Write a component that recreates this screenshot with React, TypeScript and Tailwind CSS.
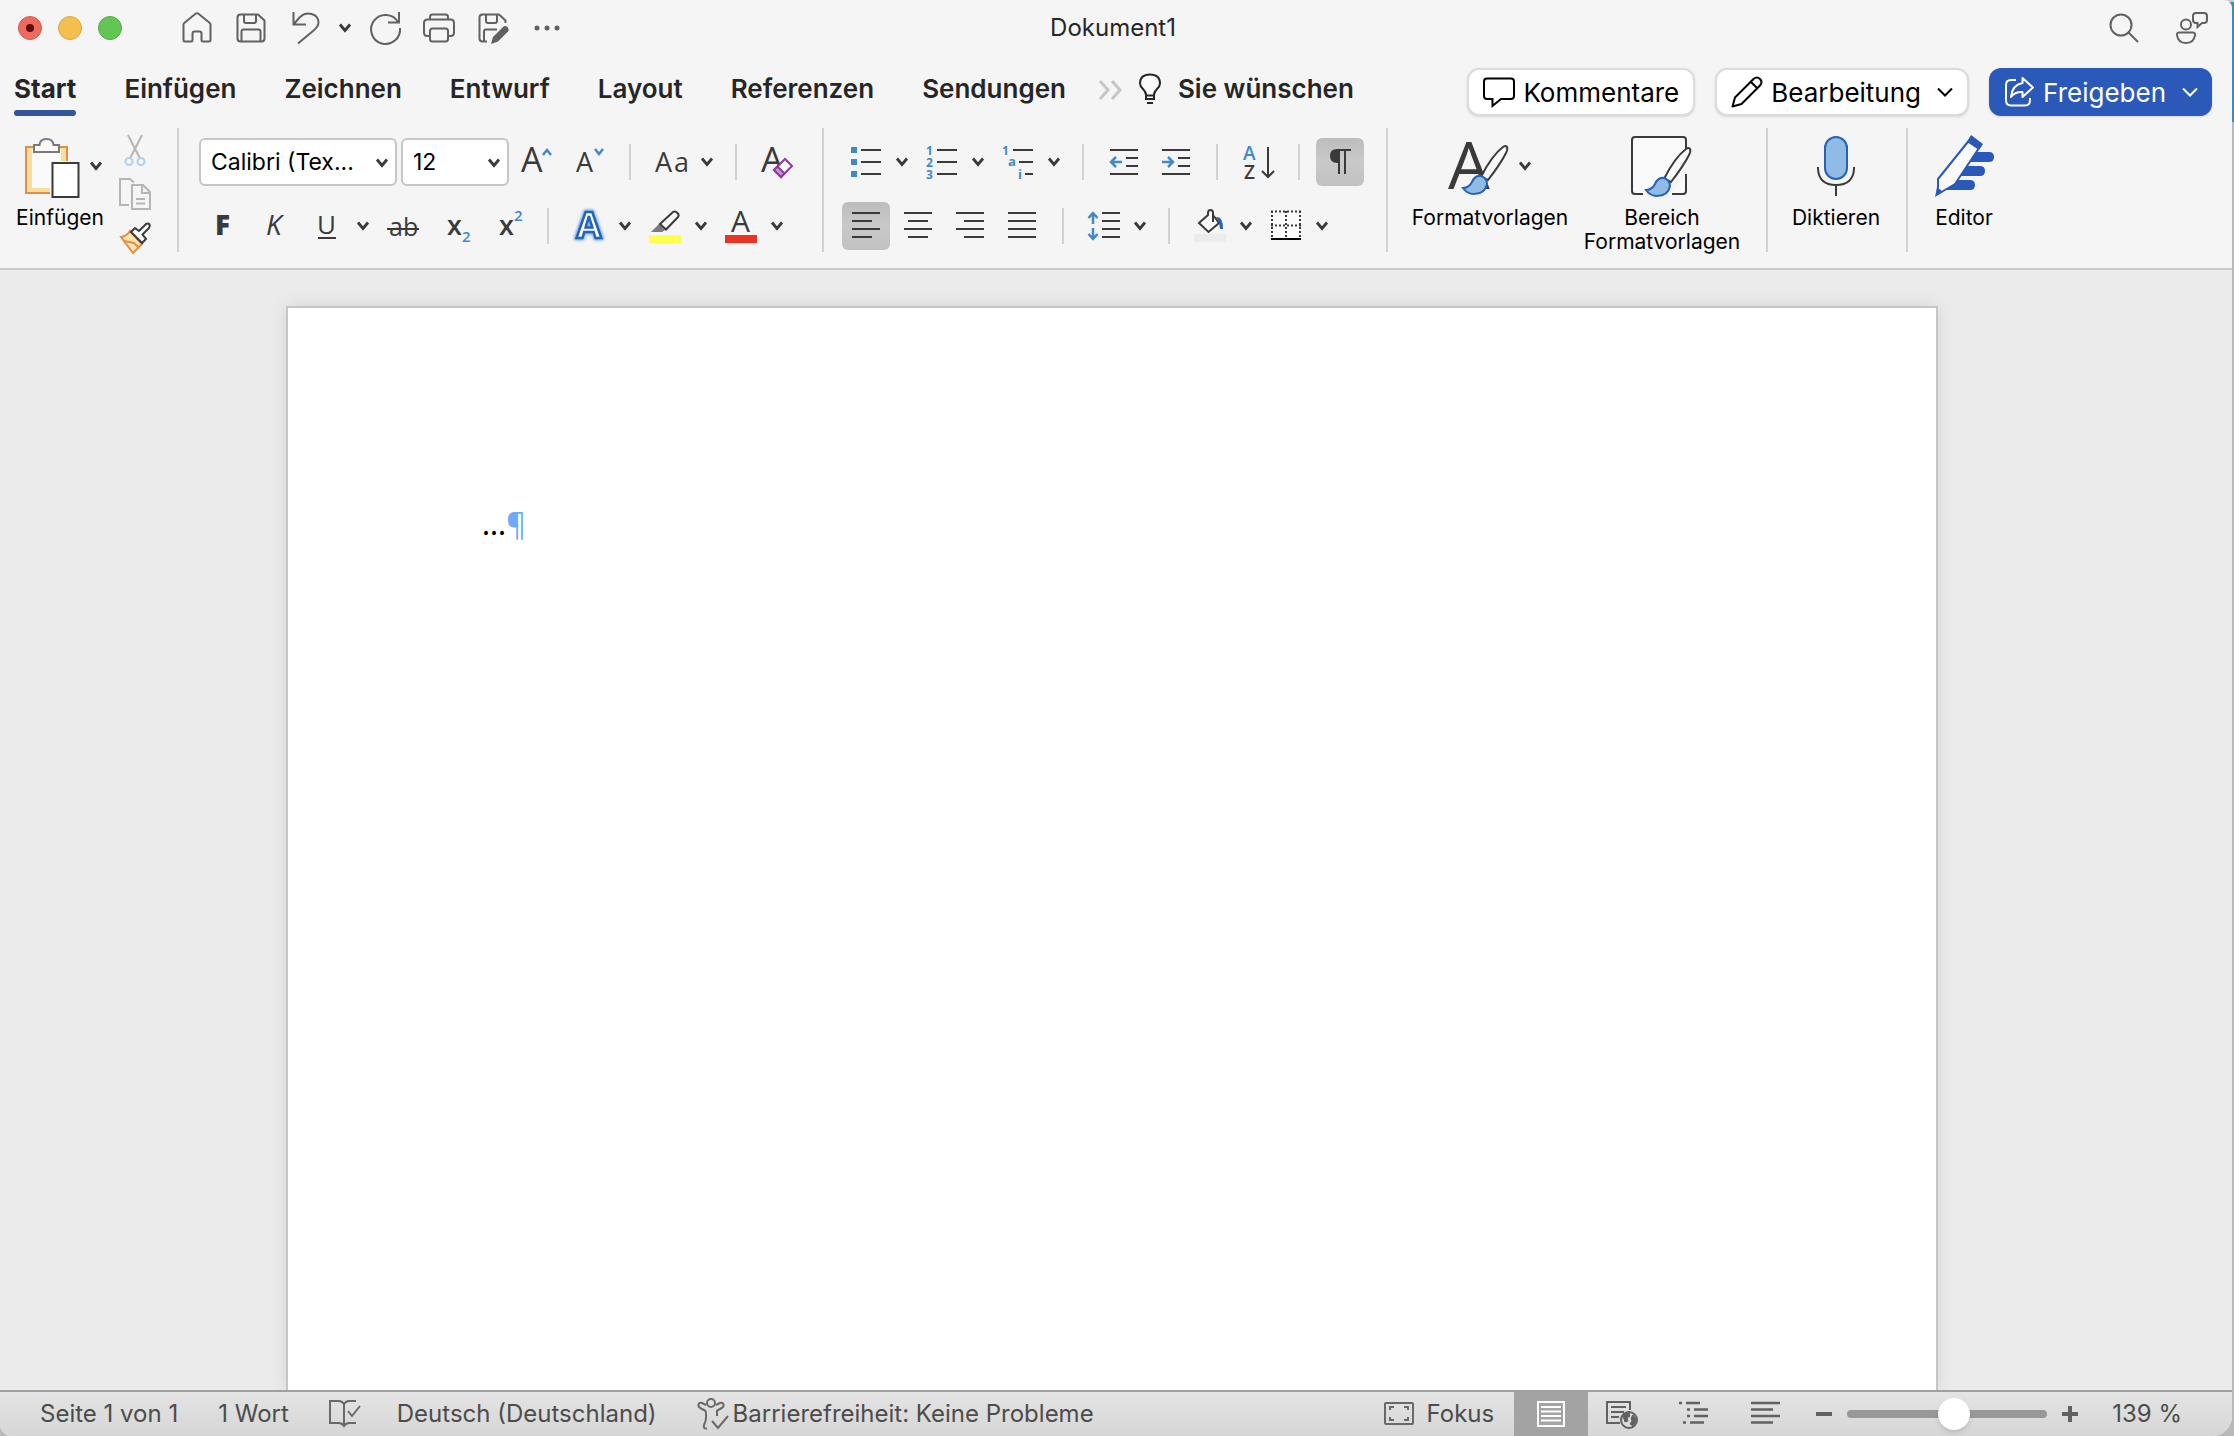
import { useState } from "react";
import type { ReactNode } from "react";

const tabs = ["Start", "Einfügen", "Zeichnen", "Entwurf", "Layout", "Referenzen", "Sendungen"];

function Chevron({ className = "" }: { className?: string }) {
  return (
    <svg width="14" height="10" viewBox="0 0 14 10" fill="none" stroke="currentColor" strokeWidth="2.8" className={className}>
      <path d="M2 1.500L7 7.500L12 1.500" />
    </svg>
  );
}

function Icon({ children, className = "" }: { children: ReactNode; className?: string }) {
  return (
    <svg
      width="32"
      height="32"
      viewBox="0 0 32 32"
      fill="none"
      stroke="currentColor"
      strokeWidth="2"
      className={`shrink-0 overflow-visible ${className}`}
      aria-hidden="true"
    >
      {children}
    </svg>
  );
}

function QuickButton({ label, children }: { label: string; children: ReactNode }) {
  return (
    <button aria-label={label} className="flex w-[54px] items-center justify-center text-[#616161]">
      <Icon>{children}</Icon>
    </button>
  );
}

function ToolButton({ label, active = false, children }: { label: string; active?: boolean; children: ReactNode }) {
  return (
    <button
      aria-label={label}
      aria-pressed={active}
      className={
        active
          ? "flex size-12 items-center justify-center rounded-md bg-linear-to-b from-[#bdbdbd] via-[#c9c9c9] to-[#c1c1c1]"
          : "flex size-12 items-center justify-center rounded-md"
      }
    >
      <Icon>{children}</Icon>
    </button>
  );
}

function MenuButton({ label, children }: { label: string; children: ReactNode }) {
  return (
    <div className="flex">
      <ToolButton label={label}>{children}</ToolButton>
      <button aria-label={`${label}, Optionen`} className="flex w-6 items-center justify-center">
        <Chevron />
      </button>
    </div>
  );
}

function Separator() {
  return (
    <div className="flex w-[26px] justify-center">
      <div className="h-9 w-[2px] bg-[#d2d2d2]" />
    </div>
  );
}

function Select({ label, value, className }: { label: string; value: string; className: string }) {
  return (
    <div className={`relative ${className}`}>
      <select
        aria-label={label}
        className="h-12 w-full appearance-none rounded-md border-2 border-[#c6c6c6] bg-white pl-[10px] text-[23px] text-black"
      >
        <option>{value}</option>
      </select>
      <Chevron className="pointer-events-none absolute top-5 right-2" />
    </div>
  );
}

function Letter({ x, y, size, children, fill = "#3a3a3a", weight = 400, italic = false }: {
  x: number; y: number; size: number; children: ReactNode; fill?: string; weight?: number; italic?: boolean
}) {
  return (
    <text
      x={x}
      y={y}
      fontSize={size}
      fill={fill}
      stroke="none"
      fontWeight={weight}
      fontStyle={italic ? "italic" : "normal"}
      className="font-['Open_Sans','Noto_Sans',sans-serif]"
    >
      {children}
    </text>
  );
}

function Brush() {
  return (
    <>
      <path d="M24 34C30 22 38 10 46 4Q49 2 50 4Q51 6 49 10C44 20 38 28 31 37Z" fill="#fafafa" stroke="#3a3a3a" />
      <path d="M6 45Q12 45 15 39Q18 32 24 33Q30 35 30 41Q28 51 17 51Q10 51 6 45Z" fill="#90bbe6" stroke="#2563b5" />
    </>
  );
}

function TitleBar() {
  return (
    <header className="flex h-14 items-center pr-6 pl-[18px]">
      <div className="flex flex-1 items-center">
        <div className="flex gap-4">
          <button aria-label="Schließen" className="flex size-6 items-center justify-center rounded-full border border-[#d85a50] bg-[#ed6a5e]">
            <span className="size-2 rounded-full bg-[#5f0d08]" />
          </button>
          <button aria-label="Minimieren" className="size-6 rounded-full border border-[#dfa43c] bg-[#f5bf4f]" />
          <button aria-label="Zoomen" className="size-6 rounded-full border border-[#52ae40] bg-[#62c554]" />
        </div>
        <div className="ml-12 flex">
          <QuickButton label="Startseite">
            <path d="M2.500 12.500Q2.500 11.500 3.500 10.700L14.500 1.700Q16 .8 17.500 1.700L28.500 10.700Q29.500 11.500 29.500 12.500V28Q29.500 29.500 28 29.500H22Q20.500 29.500 20.500 28V21.500Q20.500 19.500 18.500 19.500H13.500Q11.500 19.500 11.500 21.500V28Q11.500 29.500 10 29.500H4Q2.500 29.500 2.500 28Z" />
          </QuickButton>
          <QuickButton label="Speichern">
            <path d="M5.500 2.500H23L29.500 8.500V26.500Q29.500 29.500 26.500 29.500H5.500Q2.500 29.500 2.500 26.500V5.500Q2.500 2.500 5.500 2.500Z" />
            <path d="M9 3V9Q9 11 11 11H19Q21 11 21 9V3" />
            <path d="M6.500 29V19.500Q6.500 17.500 8.500 17.500H23.500Q25.500 17.500 25.500 19.500V29" />
          </QuickButton>
          <QuickButton label="Rückgängig">
            <path d="M4.500 0V12.500H17M4.500 12.500L11 5C17 -1 29.500 1 29.500 10.500C29.500 14 27 16.500 24 19L9 31.500" />
          </QuickButton>
          <button aria-label="Rückgängig, Optionen" className="flex w-[26px] items-center justify-center text-[#3a3a3a]">
            <Chevron />
          </button>
          <QuickButton label="Wiederholen">
            <path d="M30 0V10.500H19M29 10A14.500 14.500 0 1 0 31 16" />
          </QuickButton>
          <QuickButton label="Drucken">
            <path d="M7 7.500V5Q7 2.500 9.500 2.500H22.500Q25 2.500 25 5V7.500" />
            <path d="M7 24H4.500Q1 24 1 20.500V11Q1 7.500 4.500 7.500H27.500Q31 7.500 31 11V20.500Q31 24 27.500 24H25" />
            <rect x="7" y="16.500" width="18" height="13" rx="2.500" />
          </QuickButton>
          <QuickButton label="Speichern unter">
            <path d="M10 29.500H5.500Q2.500 29.500 2.500 26.500V5.500Q2.500 2.500 5.500 2.500H22L28.500 8.500V11" />
            <path d="M9 3V9Q9 11 11 11H18Q20 11 20 9V3M7 29V19.500Q7 17.500 9 17.500H20" />
            <path d="M14 32L16 25L26 15Q28 13 30.500 15Q32.500 17.500 31 19.500L21 29.500Z" fill="currentColor" stroke="none" />
          </QuickButton>
          <QuickButton label="Mehr">
            <g fill="currentColor" stroke="none">
              <circle cx="6" cy="16" r="2.500" />
              <circle cx="16" cy="16" r="2.500" />
              <circle cx="26" cy="16" r="2.500" />
            </g>
          </QuickButton>
        </div>
      </div>
      <h1 className="text-[24px] text-[#262626]">Dokument1</h1>
      <div className="flex flex-1 justify-end gap-9 text-[#616161]">
        <button aria-label="Suchen">
          <Icon>
            <circle cx="13" cy="13" r="10.500" />
            <path d="M20.500 20.500L30 30" />
          </Icon>
        </button>
        <button aria-label="Konto">
          <Icon>
            <circle cx="10" cy="12.500" r="5" />
            <path d="M3.500 20.500H16.500Q19.500 20.500 19 23Q18 31 10 31Q2 31 1 23Q.5 20.500 3.500 20.500Z" />
            <path d="M20 1H28Q31 1 31 4V8Q31 11 28 11H26L21.500 15V11H20Q17 11 17 8V4Q17 1 20 1Z" />
          </Icon>
        </button>
      </div>
    </header>
  );
}

function TabBar() {
  const [current, setCurrent] = useState("Start");

  return (
    <nav className="flex items-center justify-between pt-3 pr-5 pb-1 pl-[14px]">
      <div className="flex h-12 items-start">
        <div className="flex gap-12">
          {tabs.map((tab) => (
            <button
              key={tab}
              onClick={() => setCurrent(tab)}
              className={
                tab === current
                  ? "flex h-12 flex-col justify-between pt-[5px] text-[26px] leading-8 font-bold text-[#262626]"
                  : "flex h-12 flex-col justify-between pt-[5px] text-[26px] leading-8 font-semibold text-[#262626]"
              }
            >
              {tab}
              {tab === current && <span className="h-[6px] w-full rounded-full bg-[#34549b]" />}
            </button>
          ))}
        </div>
        <button aria-label="Weitere Registerkarten" className="ml-8 pt-3 text-[#c6c6c6]">
          <svg width="26" height="20" viewBox="0 0 26 20" fill="none" stroke="currentColor" strokeWidth="3">
            <path d="M2 1L10 10L2 19M14 1L22 10L14 19" />
          </svg>
        </button>
        <button className="ml-[14px] flex items-center gap-4 pt-[5px] text-[26px] leading-8 font-semibold text-[#262626]">
          <svg width="24" height="32" viewBox="0 0 24 32" fill="none" stroke="currentColor" strokeWidth="2">
            <path d="M8 22Q8 19 5 16Q2 13 2 10.500Q2 1.500 12 1.500Q22 1.500 22 10.500Q22 13 19 16Q16 19 16 22V26H8Z" fill="#fafafa" />
            <path d="M8 22.500H16M9 30H15" />
          </svg>
          Sie wünschen
        </button>
      </div>
      <div className="flex gap-5">
        <button className="flex h-12 items-center gap-2 rounded-xl border-2 border-[#dcdcdc] bg-white px-[14px] text-[26px] text-black shadow-sm">
          <Icon>
            <path d="M4 2.500H28Q31 2.500 31 5.500V20Q31 23 28 23H18L9.500 30V23H4Q1 23 1 20V5.500Q1 2.500 4 2.500Z" />
          </Icon>
          Kommentare
        </button>
        <button className="flex h-12 items-center gap-2 rounded-xl border-2 border-[#dcdcdc] bg-white px-[14px] text-[26px] text-black shadow-sm">
          <Icon>
            <path d="M1.500 30.500L4 21.500L22.500 3Q26 0 29 3Q32 6 29 9.500L10.500 28Z M20 6L26 12" strokeLinejoin="round" />
          </Icon>
          Bearbeitung
          <svg width="16" height="10" viewBox="0 0 16 10" fill="none" stroke="currentColor" strokeWidth="2" className="ml-2">
            <path d="M1 1.500L8 8.500L15 1.500" />
          </svg>
        </button>
        <button className="flex h-12 items-center gap-2 rounded-xl bg-[#2b59ba] px-[14px] text-[26px] text-white shadow-sm">
          <Icon>
            <path d="M13 4H8Q3 4 3 9V24Q3 29.500 8 29.500H22Q27 29.500 27 24V22" />
            <path d="M19.500 2L30 11.500L19.500 21V16Q12 15.500 8 21Q9 9 19.500 7Z" strokeLinejoin="round" />
          </Icon>
          Freigeben
          <svg width="16" height="10" viewBox="0 0 16 10" fill="none" stroke="currentColor" strokeWidth="2" className="ml-2">
            <path d="M1 1.500L8 8.500L15 1.500" />
          </svg>
        </button>
      </div>
    </nav>
  );
}

function ClipboardGroup() {
  return (
    <section className="flex border-r-2 border-[#d2d2d2] pt-[6px] pr-[26px] pl-3">
      <button className="flex w-24 flex-col items-center">
        <span className="flex items-center gap-2 pl-2">
          <svg width="56" height="64" viewBox="0 0 56 64" fill="none" strokeWidth="2">
            <rect x="1" y="13" width="41" height="46" fill="#f6de9c" stroke="#df8f47" />
            <rect x="7" y="15" width="29" height="39" fill="#fafafa" />
            <path d="M9 18V11H14.500Q15 5 21.500 5Q28 5 28.500 11H34V18Z" fill="#fafafa" stroke="#7a7a7a" />
            <rect x="25" y="27" width="31" height="37" fill="#f5f5f5" />
            <rect x="27.500" y="29" width="26" height="34" fill="#fff" stroke="#3a3a3a" />
          </svg>
          <Chevron />
        </span>
        <span className="mt-2 text-[21px] leading-6 text-black">Einfügen</span>
      </button>
      <div className="ml-[11px] flex flex-col gap-3">
        <button aria-label="Ausschneiden">
          <Icon>
            <path d="M9 1L20.500 23.500M23 1L11.500 23.500" stroke="#b5b5b5" />
            <circle cx="10" cy="27.500" r="3.500" stroke="#b3cfe9" />
            <circle cx="22" cy="27.500" r="3.500" stroke="#b3cfe9" />
          </Icon>
        </button>
        <button aria-label="Kopieren">
          <Icon>
            <g stroke="#b5b5b5">
              <path d="M10 27H1V1H11L15 4.500" />
              <path d="M13 7H24L31 14V31H13ZM23 7V15H31M17 21H26M17 25.500H26" />
            </g>
          </Icon>
        </button>
        <button aria-label="Format übertragen">
          <Icon>
            <path d="M11 9L23 22L14 31L2 15Q8 14 11 9Z" fill="#fbe3b0" stroke="#df8f47" />
            <path d="M5 19L15 21L19 25" stroke="#df8f47" />
            <path d="M12 10L16 6L20 9L27 2Q29 1 30.500 2.500Q31.500 4 30 6L23.500 12.500L27 17L23 21Z" fill="#fafafa" stroke="#3a3a3a" />
          </Icon>
        </button>
      </div>
    </section>
  );
}

function FontGroup() {
  return (
    <section className="flex flex-col gap-4 border-r-2 border-[#d2d2d2] pt-[10px] pr-[21px] pl-5">
      <div className="flex items-center gap-1">
        <Select label="Schriftart" value="Calibri (Tex..." className="w-[198px]" />
        <Select label="Schriftgrad" value="12" className="w-[108px]" />
        <ToolButton label="Schriftgrad vergrößern">
          <Letter x={0} y={26} size={34} weight={400}>A</Letter>
          <path d="M22 9L26 4L30 9" stroke="#4189cb" strokeWidth="2.5" />
        </ToolButton>
        <ToolButton label="Schriftgrad verkleinern">
          <Letter x={3} y={26} size={27} weight={400}>A</Letter>
          <path d="M22 3L26 8L30 3" stroke="#4189cb" strokeWidth="2.5" />
        </ToolButton>
        <Separator />
        <MenuButton label="Groß-/Kleinschreibung">
          <Letter x={0} y={26} size={27}>A</Letter>
          <Letter x={19} y={26} size={27}>a</Letter>
        </MenuButton>
        <Separator />
        <ToolButton label="Formatierung löschen">
          <Letter x={0} y={26} size={35} weight={400}>A</Letter>
          <path d="M13 24L24 13L31 20L20 31Z" fill="#fafafa" stroke="#8f3a9c" />
          <path d="M13 24L16.500 20.500L23.500 27.500L20 31Z" fill="#c795cf" stroke="#8f3a9c" />
        </ToolButton>
      </div>
      <div className="flex items-center gap-1">
        <ToolButton label="Fett">
          <Letter x={8} y={25} size={28} weight={800}>F</Letter>
        </ToolButton>
        <ToolButton label="Kursiv">
          <Letter x={7} y={25} size={28} italic>K</Letter>
        </ToolButton>
        <MenuButton label="Unterstrichen">
          <Letter x={6} y={24} size={26}>U</Letter>
          <path d="M7 28H25" stroke="#3a3a3a" />
        </MenuButton>
        <ToolButton label="Durchgestrichen">
          <Letter x={2} y={26} size={25}>ab</Letter>
          <path d="M0 19H32" stroke="#3a3a3a" />
        </ToolButton>
        <ToolButton label="Tiefgestellt">
          <Letter x={8} y={25} size={27} weight={600}>x</Letter>
          <Letter x={23} y={32} size={15} weight={600} fill="#4189cb">2</Letter>
        </ToolButton>
        <ToolButton label="Hochgestellt">
          <Letter x={8} y={25} size={27} weight={600}>x</Letter>
          <Letter x={23} y={11} size={15} weight={600} fill="#4189cb">2</Letter>
        </ToolButton>
        <Separator />
        <MenuButton label="Texteffekte">
          <text
            x="16"
            y="28"
            textAnchor="middle"
            fontSize="36"
            fontWeight="700"
            stroke="#2563b5"
            strokeWidth="2.500"
            fill="#fff"
            className="font-['Open_Sans',sans-serif] [filter:drop-shadow(0_0_1px_#90bbe6)_drop-shadow(0_0_1px_#90bbe6)_drop-shadow(0_0_1px_#90bbe6)]"
          >
            A
          </text>
        </MenuButton>
        <MenuButton label="Texthervorhebungsfarbe">
          <rect x="0" y="25" width="32" height="8" fill="#ffff4d" stroke="none" />
          <path d="M2 22L10 14L16 20L13 22Z" fill="#7a7a7a" stroke="none" />
          <path d="M11 14L24 2Q26 .5 28.500 3Q30.500 5 29 7L17 19.500Z" fill="#fafafa" stroke="#3a3a3a" />
        </MenuButton>
        <MenuButton label="Schriftfarbe">
          <Letter x={6} y={22} size={30}>A</Letter>
          <rect x="0" y="25" width="32" height="8" fill="#ea3323" stroke="none" />
        </MenuButton>
      </div>
    </section>
  );
}

function ParagraphGroup() {
  return (
    <section className="flex flex-col gap-4 border-r-2 border-[#d2d2d2] pt-[10px] pr-[22px] pl-[18px]">
      <div className="flex items-center gap-1">
        <MenuButton label="Aufzählungszeichen">
          <path d="M11 4H31M11 16H31M11 28H31" />
          <path d="M1 1H7V7H1ZM1 13H7V19H1ZM1 25H7V31H1Z" fill="#4189cb" stroke="none" />
        </MenuButton>
        <MenuButton label="Nummerierung">
          <path d="M11 4H31M11 16H31M11 28H31" />
          <Letter x={0} y={9} size={12} weight={700} fill="#4189cb">1</Letter>
          <Letter x={0} y={21} size={12} weight={700} fill="#4189cb">2</Letter>
          <Letter x={0} y={33} size={12} weight={700} fill="#4189cb">3</Letter>
        </MenuButton>
        <MenuButton label="Liste mit mehreren Ebenen">
          <path d="M11 4H31M17 16H31M23 28H31" />
          <Letter x={0} y={9} size={12} weight={700} fill="#4189cb">1</Letter>
          <Letter x={6} y={20} size={13} weight={700} fill="#4189cb">a</Letter>
          <Letter x={16} y={33} size={13} weight={700} fill="#4189cb">i</Letter>
        </MenuButton>
        <Separator />
        <ToolButton label="Einzug verkleinern">
          <path d="M2 4H30M18 12H30M18 20H30M2 28H30" />
          <path d="M14 16H4M8 11L3 16L8 21" stroke="#4189cb" strokeWidth="2.5" />
        </ToolButton>
        <ToolButton label="Einzug vergrößern">
          <path d="M2 4H30M18 12H30M18 20H30M2 28H30" />
          <path d="M2 16H12M8 11L13 16L8 21" stroke="#4189cb" strokeWidth="2.5" />
        </ToolButton>
        <Separator />
        <ToolButton label="Sortieren">
          <Letter x={1} y={14} size={19} weight={600} fill="#4189cb">A</Letter>
          <Letter x={2} y={33} size={19} weight={600}>Z</Letter>
          <path d="M26 1V31M20 25L26 31L32 25" />
        </ToolButton>
        <Separator />
        <ToolButton label="Formatierungszeichen anzeigen" active>
          <path d="M15 4H13Q7 4 7 10Q7 16 13 16H15Z" fill="currentColor" />
          <path d="M14 4H27M15 3V28M21 3V28" />
        </ToolButton>
      </div>
      <div className="flex items-center gap-1">
        <ToolButton label="Linksbündig" active>
          <path d="M2 3H30M2 11H22M2 19H30M2 27H22" />
        </ToolButton>
        <ToolButton label="Zentriert">
          <path d="M2 3H30M6 11H26M2 19H30M6 27H26" />
        </ToolButton>
        <ToolButton label="Rechtsbündig">
          <path d="M2 3H30M10 11H30M2 19H30M10 27H30" />
        </ToolButton>
        <ToolButton label="Blocksatz">
          <path d="M2 3H30M2 11H30M2 19H30M2 27H30" />
        </ToolButton>
        <Separator />
        <MenuButton label="Zeilenabstand">
          <path d="M14 3H32M14 11H32M14 19H32M14 27H32" />
          <path d="M5 14V3M.5 8L5 3L9.500 8M5 18V29M.5 24L5 29L9.500 24" stroke="#4189cb" strokeWidth="2.500" />
        </MenuButton>
        <Separator />
        <MenuButton label="Schattierung">
          <rect x="0" y="24" width="32" height="8" fill="#ececec" stroke="none" />
          <path d="M5 13L14 5V3Q14 0 16.500 0Q19 0 19 3V5L25 13L14.500 22Z" fill="#fafafa" />
          <path d="M19 3V12" />
          <path d="M22 7Q29 6 29 19L26 19L25 12Z" fill="#2563b5" stroke="none" />
        </MenuButton>
        <MenuButton label="Rahmen">
          <path d="M1 1H31V29H1Z" fill="#fafafa" stroke="none" />
          <path d="M1 1.500H31M2 1V28M30 1V28M1 15.500H31M16 1V28" strokeDasharray="2 2" />
          <path d="M1 29H31" stroke="#000" />
        </MenuButton>
      </div>
    </section>
  );
}

function Ribbon() {
  return (
    <div className="border-b-2 border-[#c9c9c9] pt-2 pb-4 text-[#3a3a3a]">
      <div className="flex h-[124px]">
        <ClipboardGroup />
        <FontGroup />
        <ParagraphGroup />
        <section className="flex items-start gap-2 border-r-2 border-[#d2d2d2] pt-[6px] pr-[22px] pl-5">
          <button className="flex w-[164px] flex-col items-center">
            <span className="flex items-center gap-2">
              <svg width="62" height="64" viewBox="0 0 62 64" fill="none" strokeWidth="2" className="overflow-visible">
                <Letter x={0} y={55} size={66} weight={400}>A</Letter>
                <g transform="translate(9 9)">
                  <Brush />
                </g>
              </svg>
              <Chevron />
            </span>
            <span className="mt-2 text-[21px] leading-6 text-black">Formatvorlagen</span>
          </button>
          <button className="flex w-[164px] flex-col items-center">
            <svg width="62" height="64" viewBox="0 0 62 64" fill="none" strokeWidth="2">
              <path d="M12 60H4Q1 60 1 57V6Q1 3 4 3H52Q55 3 55 6V22M55 40V57Q55 60 52 60H41" fill="#fafafa" stroke="#3a3a3a" />
              <g transform="translate(9 11)">
                <Brush />
              </g>
            </svg>
            <span className="mt-2 text-[21px] leading-6 text-black">
              Bereich
              <br />
              Formatvorlagen
            </span>
          </button>
        </section>
        <section className="flex items-start border-r-2 border-[#d2d2d2] pt-[6px] pr-[18px] pl-4">
          <button className="flex w-[104px] flex-col items-center">
            <svg width="40" height="64" viewBox="0 0 40 64" fill="none" strokeWidth="2">
              <rect x="9" y="3" width="22" height="42" rx="11" fill="#90bbe6" stroke="#2563b5" />
              <path d="M2 33V35Q3 51 20 51Q37 51 38 35V33M20 51V62" stroke="#3a3a3a" />
            </svg>
            <span className="mt-2 text-[21px] leading-6 text-black">Diktieren</span>
          </button>
        </section>
        <section className="flex items-start pt-[6px] pl-4">
          <button className="flex w-20 flex-col items-center">
            <svg width="64" height="64" viewBox="0 0 64 64" fill="none" strokeWidth="2">
              <path d="M36 18H57Q62 18 62 23Q62 28 57 28H29ZM26 32H48Q53 32 53 37Q53 42 48 42H20ZM17 46H38Q43 46 43 51Q43 56 38 56H9Z" fill="#2b59ba" />
              <path d="M39 4L49 11L23 50L6 60L6 45Z" fill="#fafafa" stroke="#2b59ba" strokeLinejoin="round" />
              <path d="M39 1L51 10L47 16L35 8ZM3 63L5 53L11 58Z" fill="#2b59ba" />
            </svg>
            <span className="mt-2 text-[21px] leading-6 text-black">Editor</span>
          </button>
        </section>
      </div>
    </div>
  );
}

function StatusBar() {
  const [zoom, setZoom] = useState(54);

  return (
    <footer className="flex h-[46px] items-center justify-between border-t-2 border-[#a0a0a0] bg-linear-to-b from-[#e4e4e4] to-[#d6d6d6] pr-[50px] pl-10 text-[24px] text-[#4c4c4c]">
      <div className="flex items-center">
        <button>Seite 1 von 1</button>
        <button className="ml-10">1 Wort</button>
        <button aria-label="Rechtschreibung" className="ml-10">
          <Icon className="text-[#696969]">
            <path d="M15 28V6Q13 3 10 3H1V25H10Q13 25 15 28Q17 25 20 25H27M15 6Q17 3 20 3H27" />
            <path d="M19 13L23 18L31 8" />
          </Icon>
        </button>
        <button className="ml-9">Deutsch (Deutschland)</button>
        <button className="ml-10 flex items-center gap-1">
          <Icon className="text-[#696969]">
            <circle cx="14" cy="5" r="4" />
            <path d="M9 7L5 5Q2 4 1.500 6.500Q1 9 4 10.500L8 12.500Q9 13 9 16V20Q9 23 7 27Q6 31 10 30.500M19 7L23 5Q26 4 26.500 6.500Q27 9 24 10.500L20 12.500V18" />
            <path d="M15 23L21 30L31 18" />
          </Icon>
          Barrierefreiheit: Keine Probleme
        </button>
      </div>
      <div className="flex h-full items-center text-[#616161]">
        <button className="flex items-center gap-3 text-[#4c4c4c]">
          <Icon className="text-[#696969]">
            <rect x="2" y="5" width="28" height="21" rx="1" />
            <path d="M7 12V9H11M21 9H25V12M25 19V22H21M11 22H7V19" />
          </Icon>
          Fokus
        </button>
        <button aria-label="Seitenlayout" className="ml-5 flex h-full w-[74px] items-center justify-center bg-[#a3a3a3] text-white">
          <Icon>
            <path d="M3 4H29V28H3ZM6 9H26M6 13.500H26M6 18H26M6 22.500H26" />
          </Icon>
        </button>
        <button aria-label="Weblayout" className="ml-[18px]">
          <Icon>
            <path d="M14 25H1V4H24V12M5 9H20M5 14H18M5 19H13" />
            <circle cx="23" cy="22" r="8" fill="#dcdcdc" />
            <path d="M17 18Q19 15 23 15L24 18L21 20L22 23L19 24ZM27 17Q30 20 30 23L27 28L24 26L26 23L25 20Z" fill="currentColor" strokeWidth="1" />
          </Icon>
        </button>
        <button aria-label="Gliederung" className="ml-10">
          <Icon>
            <path d="M1 5H4M8 5H22M9 11.500H12M16 11.500H30M9 18H12M16 18H30M5 24.500H8M12 24.500H26" strokeWidth="2.500" />
          </Icon>
        </button>
        <button aria-label="Entwurf" className="ml-10">
          <Icon>
            <path d="M1 5H30M1 11.500H23M1 18H30M1 24.500H23" strokeWidth="2.500" />
          </Icon>
        </button>
        <button aria-label="Verkleinern" className="ml-8">
          <svg width="20" height="20" viewBox="0 0 20 20" stroke="currentColor" strokeWidth="4">
            <path d="M2 10H18" />
          </svg>
        </button>
        <input
          type="range"
          aria-label="Zoom"
          min={0}
          max={100}
          value={zoom}
          onChange={(e) => setZoom(Number(e.target.value))}
          className="mx-[13px] h-2 w-[200px] appearance-none rounded-full bg-[#989898] [&::-webkit-slider-thumb]:size-8 [&::-webkit-slider-thumb]:appearance-none [&::-webkit-slider-thumb]:rounded-full [&::-webkit-slider-thumb]:bg-white [&::-webkit-slider-thumb]:shadow-md"
        />
        <button aria-label="Vergrößern">
          <svg width="20" height="20" viewBox="0 0 20 20" stroke="currentColor" strokeWidth="4">
            <path d="M2 10H18M10 2V18" />
          </svg>
        </button>
        <button className="ml-8 text-[#4c4c4c]">139 %</button>
      </div>
    </footer>
  );
}

function App() {
  return (
    <div className="min-h-screen bg-[linear-gradient(to_bottom,#cccccc_2px,#3c8bc0_2px,#3c8bc0_122px,#b9b9b9_122px)] pr-[2px] font-['Inter',sans-serif]">
      <div className="flex min-h-screen flex-col overflow-hidden rounded-tr-lg rounded-br-[20px] rounded-bl-xl bg-[#f5f5f5]">
        <TitleBar />
        <TabBar />
        <Ribbon />
        <main className="flex flex-1 justify-center bg-[#ebebeb] pt-9 pr-2">
          <article className="w-full max-w-[1652px] border-2 border-b-0 border-[#c6c6c6] bg-white px-[194px] pt-[196px] shadow-[0_0_16px_rgba(0,0,0,0.1)]">
            <p className="font-['Noto_Sans',sans-serif] text-[30px] leading-10 text-black">
              ...<span className="text-[#6aabfa]">¶</span>
            </p>
          </article>
        </main>
        <StatusBar />
      </div>
    </div>
  );
}

export default App;
